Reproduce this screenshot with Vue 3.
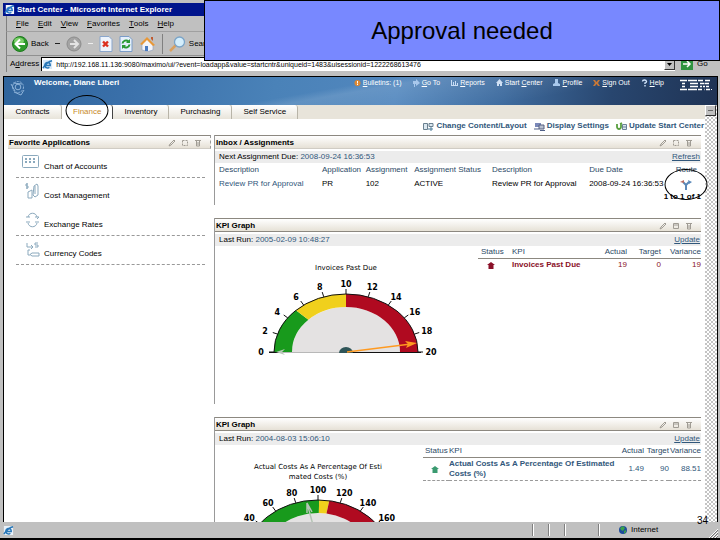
<script setup>
import { ref } from 'vue'

const address = ref('http://192.168.11.136:9080/maximo/ui/?event=loadapp&value=startcntr&uniqueid=1483&uisessionid=1222268613476')

const menus = ['File', 'Edit', 'View', 'Favorites', 'Tools', 'Help']
const tabs = ['Contracts', 'Finance', 'Inventory', 'Purchasing', 'Self Service']
const activeTab = ref('Finance')

const navLinks = [
  { key: 'B', rest: 'ulletins: (1)', icon: 'bulletin' },
  { key: 'G', rest: 'o To', icon: 'goto' },
  { key: 'R', rest: 'eports', icon: 'reports' },
  { pre: 'Start ', key: 'C', rest: 'enter', icon: 'home' },
  { key: 'P', rest: 'rofile', icon: 'profile' },
  { key: 'S', rest: 'ign Out', icon: 'signout' },
  { key: 'H', rest: 'elp', icon: 'help' }
]

const pageLinks = [
  { label: 'Change Content/Layout', icon: 'layout' },
  { label: 'Display Settings', icon: 'display' },
  { label: 'Update Start Center', icon: 'update' }
]

const favorites = [
  { name: 'Chart of Accounts', icon: 'chart', line: true },
  { name: 'Cost Management', icon: 'cost', line: false },
  { name: 'Exchange Rates', icon: 'exchange', line: true },
  { name: 'Currency Codes', icon: 'currency', line: true }
]

const RX = 72
const RY = 58
const IRX = 54
const IRY = 45

// t runs from 0 (left end of the dial) to 1 (right end)
const point = (g, t, rx, ry) => {
  const a = Math.PI * (1 - t)
  return [g.cx + rx * Math.cos(a), g.cy - ry * Math.sin(a)]
}

const segment = (g, from, to) => {
  const [x1, y1] = point(g, from, RX, RY)
  const [x2, y2] = point(g, to, RX, RY)
  const [x3, y3] = point(g, to, IRX, IRY)
  const [x4, y4] = point(g, from, IRX, IRY)
  return `M${x1} ${y1}A${RX} ${RY} 0 0 1 ${x2} ${y2}L${x3} ${y3}A${IRX} ${IRY} 0 0 0 ${x4} ${y4}Z`
}

const buildGauge = (g) => ({
  ...g,
  segments: g.bands.map(b => ({ color: b[2], d: segment(g, b[0], b[1]) })),
  ticks: g.marks.map(value => {
    const t = value / g.max
    return {
      value,
      from: point(g, t, RX, RY),
      to: point(g, t, RX + 5, RY + 5),
      label: point(g, t, RX + 13, RY + 10)
    }
  })
})

const green = '#189a1c'
const yellow = '#f0d01c'
const red = '#b00a20'

const kpis = [
  {
    lastRun: '2005-02-09 10:48:27',
    kpi: 'Invoices Past Due',
    actual: '19',
    target: '0',
    variance: '19',
    tone: 'bad',
    gauge: buildGauge({
      cx: 131,
      cy: 106,
      max: 20,
      marks: [0, 2, 4, 6, 8, 10, 12, 14, 16, 18, 20],
      title: ['Invoices Past Due'],
      bands: [[0, 0.255, green], [0.255, 0.5, yellow], [0.5, 1, red]]
    })
  },
  {
    lastRun: '2004-08-03 15:06:10',
    kpi: 'Actual Costs As A Percentage Of Estimated Costs (%)',
    actual: '1.49',
    target: '90',
    variance: '88.51',
    tone: 'good',
    gauge: buildGauge({
      cx: 103,
      cy: 113,
      max: 200,
      marks: [40, 60, 80, 100, 120, 140, 160],
      title: ['Actual Costs As A Percentage Of Esti', 'mated Costs (%)'],
      bands: [[0, 0.505, green], [0.505, 0.55, yellow], [0.55, 1, red]]
    })
  }
]
</script>

<template>
  <div class="screen">
    <header class="title-bar">
      <svg class="ie" viewBox="0 0 12 12"><path d="M2 1h7l2 2v8H2z" fill="#f4f6fa" /><path d="M3 7h6a3 3 0 1 0-1 2M1 10C3 7 6 3 11 2" fill="none" stroke="#2a78c8" stroke-width="1.6" /></svg>
      <span>Start Center - Microsoft Internet Explorer</span>
    </header>

    <nav class="menu-bar">
      <button v-for="m in menus" :key="m" type="button"><u>{{ m[0] }}</u>{{ m.slice(1) }}</button>
    </nav>

    <div class="tool-bar">
      <button type="button" class="back">
        <svg width="16" height="16" viewBox="0 0 16 16"><circle cx="8" cy="8" r="7.5" fill="#2f9a2c" stroke="#1e7a1e" /><ellipse cx="7" cy="5" rx="5" ry="3.5" fill="#7ccf6a" /><path d="M8 3.5L3.5 8 8 12.5M4 8h9" fill="none" stroke="#fff" stroke-width="2" /></svg>
        <span>Back</span>
      </button>
      <span class="dash"></span>
      <button type="button" aria-label="Forward">
        <svg width="16" height="16" viewBox="0 0 16 16"><circle cx="8" cy="8" r="7" fill="#a4a4a4" stroke="#8c8c8c" /><path d="M8 4l4 4-4 4M12 8H4" fill="none" stroke="#e4e4e4" stroke-width="2" /></svg>
      </button>
      <span class="dash light"></span>
      <button type="button" aria-label="Stop">
        <svg width="14" height="16" viewBox="0 0 14 16"><path d="M1 .5h9l3 3v12H1z" fill="#eef4fc" stroke="#8aa6cc" /><path d="M4 5.5l5 5M9 5.5l-5 5" stroke="#dc3020" stroke-width="2.4" /></svg>
      </button>
      <button type="button" aria-label="Reload">
        <svg width="14" height="16" viewBox="0 0 14 16"><path d="M1 .5h9l3 3v12H1z" fill="#e6f0fc" stroke="#7a9cc8" /><path d="M3.5 7.5a3.5 3.5 0 0 1 6-2M10.5 8.5a3.5 3.5 0 0 1-6 2" fill="none" stroke="#2a9a34" stroke-width="2" /><path d="M11 3v4H7zM3 13V9h4z" fill="#2a9a34" /></svg>
      </button>
      <button type="button" aria-label="Home">
        <svg width="17" height="16" viewBox="0 0 17 16"><path d="M3 8l5-5 6 5v6l-5 1.5L3 14z" fill="#f4f4f8" stroke="#8a9cb8" stroke-width=".6" /><path d="M1 8l7-7 8 8-2 1-6-6-5 5z" fill="#e89838" /><path d="M6 10h3v5H6z" fill="#4a7ac0" /><path d="M12 1h2v4l-2-2z" fill="#c05a30" /></svg>
      </button>
      <i class="grip"></i>
      <button type="button" class="search">
        <svg width="17" height="16" viewBox="0 0 17 16"><path d="M7 9l-6 6" stroke="#d8a060" stroke-width="2.5" /><circle cx="10.5" cy="6" r="5" fill="#d4eefc" stroke="#7aa4c8" stroke-width="1.3" /></svg>
        <span>Search</span>
      </button>
    </div>

    <div class="address-bar">
      <label for="address">A<u>d</u>dress</label>
      <div class="address-box">
        <svg class="ie" viewBox="0 0 12 12"><path d="M1 1h8l2 2v8H1z" fill="#d8e8f8" /><path d="M3 7h6a3 3 0 1 0-1 2M1 10C3 7 6 3 11 2" fill="none" stroke="#2a78b8" stroke-width="1.6" /></svg>
        <input id="address" v-model="address" type="text" />
        <button type="button" class="drop" aria-label="Show addresses"><svg width="5" height="3" viewBox="0 0 5 3"><path d="M0 0h5L2.5 3z" /></svg></button>
      </div>
      <button type="button" class="go">
        <svg width="12" height="12" viewBox="0 0 12 12"><path d="M0 0h12v12H0z" fill="#2e9440" /><path d="M2 6h7M6 3l3 3-3 3" fill="none" stroke="#fff" stroke-width="1.5" /></svg>
        <span>Go</span>
      </button>
    </div>

    <div class="browser">
      <div class="banner">
        <svg class="emblem" viewBox="0 0 16 16"><g fill="none" stroke="#8fb4da"><circle cx="8" cy="7" r="5.5" stroke-dasharray="2 1" /><circle cx="8" cy="7" r="2.8" /><path d="M1 4l4 7M14 10l-3 5M4 12l7 3M3 3l9 1" /></g></svg>
        <strong>Welcome, Diane Liberi</strong>
        <nav>
          <a v-for="l in navLinks" :key="l.icon" href="#">
            <svg width="7" height="8" viewBox="0 0 7 8">
              <template v-if="l.icon === 'bulletin'"><circle cx="3.5" cy="4" r="3" fill="#e08830" /><path d="M3.5 2v2.5M3.5 5v1" stroke="#fff" /></template>
              <path v-else-if="l.icon === 'goto'" d="M0 2h3V0l4 4-4 3V5H2v3H1V5H0z" fill="#a8c8ec" />
              <path v-else-if="l.icon === 'reports'" d="M0 1h1v5h6v1H0zM2 3h1v3H2zM4 2h1v4H4zM6 4h1v2H6z" fill="#c8dcf4" />
              <path v-else-if="l.icon === 'home'" d="M3.5 0L7 4H6v3H4V5H3v2H1V4H0z" fill="#d0e0f4" />
              <path v-else-if="l.icon === 'profile'" d="M2 0h3v4l2 1v2H0V5l2-1z" fill="#a8c8ec" />
              <path v-else-if="l.icon === 'signout'" d="M0 1h2l1.5 2L5 1h2L5 4l2 3H5L3.5 5 2 7H0l2-3z" fill="#c87838" />
              <path v-else d="M1.5 2.5a2 1.5 0 1 1 2.5 1.5v1M4 6v1.5" fill="none" stroke="#d0e4fc" stroke-width="1.4" />
            </svg>
            <span>{{ l.pre }}<u>{{ l.key }}</u>{{ l.rest }}</span>
          </a>
        </nav>
        <svg class="ibm" viewBox="0 0 32 12" aria-label="IBM">
          <g fill="none" stroke="#fff">
            <path d="M0 1.5h7M8 1.500h9M18 1.5h5M25 1.5h5M2 4.5h3M10 4.5h8M20 4.5h4M24.500 4.5h4.500M2 7.5h3M10 7.5h8M20 7.5h2M23 7.500h2M26 7.5h3M0 10.5h7M8 10.5h9M18 10.5h4M24 10.5h0.500M26 10.5h4" stroke-width="1.500" />
            <path d="M31 10.500h1" />
          </g>
        </svg>
      </div>

      <div class="viewport">
        <main class="page">
          <div class="tabs">
            <div v-for="t in tabs" :key="t" class="tab" :class="{ active: t === activeTab }">
              <button type="button" @click="activeTab = t">{{ t }}</button>
              <i v-if="t === 'Finance'" class="ring"></i>
            </div>
          </div>

          <div class="page-links">
            <a v-for="l in pageLinks" :key="l.icon" href="#">
              <svg width="11" height="9" viewBox="0 0 11 9">
                <template v-if="l.icon === 'layout'"><path d="M.5 1.5h4v6h-4zM6 1.5h4v3H6z" fill="#dce8f0" stroke="#6a8090" /><path d="M5 7h5M8 5v4" stroke="#4a7a98" /></template>
                <template v-else-if="l.icon === 'display'"><path d="M1 1h6v4H1z" fill="#7a88b8" /><path d="M5 3h5v4H5z" fill="#b8c0d0" stroke="#566080" /><path d="M0 7h5M6 8.5h5" stroke="#506088" /></template>
                <template v-else><path d="M1 2v3a2 2 0 0 0 4 0V2M4 2l2-1" fill="none" stroke="#5aa040" stroke-width="1.8" /><path d="M6.5 2.5h4v5h-4zM6 5h5" fill="#dce8f0" stroke="#6a8098" /></template>
              </svg>
              <span>{{ l.label }}</span>
            </a>
          </div>

          <div class="columns">
            <section class="portlet favorites">
              <h2>
                <span>Favorite Applications</span>
                <svg class="tools" viewBox="0 0 34 8"><g fill="none" stroke="#a09c94"><path d="M1 7l1-2 4-4 1 1-4 4z" /><path d="M14.5 1.5h5v5h-5z" stroke-dasharray="2 1" /><path d="M27 1.5h6M28.5 2v5h3V2M30 3v3" /></g></svg>
              </h2>
              <ul>
                <li v-for="f in favorites" :key="f.name" :class="{ line: f.line }">
                  <svg width="18" height="16" viewBox="0 0 18 16">
                    <g fill="none" stroke="#8ba9bd">
                      <template v-if="f.icon === 'chart'"><rect x=".5" y="1.5" width="16" height="12" rx="1" /><path d="M3 5h11M3 8h11" stroke-width="2" stroke-dasharray="2 2" /></template>
                      <template v-else-if="f.icon === 'cost'"><path d="M6 1H4v2h2v2H4M5 0v6M6 9l4-2v8H6zM12 3l3-2 1 2v9l-3 2-2-2zM13 3v8" /></template>
                      <template v-else-if="f.icon === 'exchange'"><path d="M6 5c1-5 8-5 9 0M4 5h4M13 5h4L15 7M6 11c1 5 8 5 9 0M4 10h4M13 10h4" /></template>
                      <template v-else><path d="M5 2v4h6M9 4l2 2-2 2M16 2h-3v2h3v2h-3M8 9H6v5h2M10 12h7v3h-7l-2-1.5z" /></template>
                    </g>
                  </svg>
                  <a href="#">{{ f.name }}</a>
                </li>
              </ul>
            </section>

            <div class="right">
              <section class="portlet inbox">
                <h2>
                  <span>Inbox / Assignments</span>
                  <svg class="tools" viewBox="0 0 34 8"><g fill="none" stroke="#a09c94"><path d="M1 7l1-2 4-4 1 1-4 4z" /><path d="M14.5 1.5h5v5h-5z" stroke-dasharray="2 1" /><path d="M27 1.5h6M28.5 2v5h3V2M30 3v3" /></g></svg>
                </h2>
                <p class="info"><span>Next Assignment Due: <em>2008-09-24 16:36:53</em></span><a href="#">Refresh</a></p>
                <table class="assignments">
                  <colgroup>
                    <col class="w-desc" /><col class="w-app" /><col class="w-assign" /><col class="w-status" /><col class="w-desc2" /><col class="w-due" /><col />
                  </colgroup>
                  <thead>
                    <tr><th>Description</th><th>Application</th><th>Assignment</th><th>Assignment Status</th><th>Description</th><th>Due Date</th><th class="route">Route</th></tr>
                  </thead>
                  <tbody>
                    <tr>
                      <td><a href="#">Review PR for Approval</a></td><td>PR</td><td>102</td><td>ACTIVE</td><td>Review PR for Approval</td><td>2008-09-24 16:36:53</td>
                      <td class="route">
                        <button type="button" aria-label="Route">
                          <svg width="12" height="11" viewBox="0 0 12 11"><path d="M6 11V6L3 3M6 6l3-3" fill="none" stroke="#5a88b8" stroke-width="2" /><path d="M0 3l4-2v3z" fill="#b86a60" /><path d="M8 1l4 2-3 2z" fill="#5a88b8" /></svg>
                        </button>
                        <i class="ring"></i>
                      </td>
                    </tr>
                  </tbody>
                </table>
                <p class="count">1 to 1 of 1</p>
              </section>

              <section v-for="k in kpis" :key="k.kpi" class="portlet kpi">
                <h2>
                  <span>KPI Graph</span>
                  <svg class="tools" viewBox="0 0 34 8"><g fill="none" stroke="#a09c94"><path d="M1 7l1-2 4-4 1 1-4 4z" /><path d="M14.5 1.5h5v5h-5zM14 3h6" /><path d="M27 1.5h6M28.5 2v5h3V2M30 3v3" /></g></svg>
                </h2>
                <p class="info"><span>Last Run: <em>{{ k.lastRun }}</em></span><a href="#">Update</a></p>
                <div class="kpi-body">
                  <svg class="gauge" width="230" height="157" viewBox="0 0 230 157">
                    <text v-for="(line, i) in k.gauge.title" :key="line" class="gauge-title" :x="k.gauge.cx" :y="24 + i * 10">{{ line }}</text>
                    <ellipse :cx="k.gauge.cx" :cy="k.gauge.cy" rx="54" ry="45" fill="#e4e2e2" />
                    <rect x="0" :y="k.gauge.cy" width="230" height="60" fill="#fff" />
                    <path v-for="s in k.gauge.segments" :key="s.color" :d="s.d" :fill="s.color" />
                    <path :d="`M${k.gauge.cx - 72} ${k.gauge.cy}a72 58 0 0 1 144 0`" fill="none" stroke="#111" />
                    <template v-for="t in k.gauge.ticks" :key="t.value">
                      <line :x1="t.from[0]" :y1="t.from[1]" :x2="t.to[0]" :y2="t.to[1]" stroke="#111" />
                      <text class="tick" :x="t.label[0]" :y="t.label[1] + 3">{{ t.value }}</text>
                    </template>
                    <g v-if="k.tone === 'bad'">
                      <path d="M54 106.5h152" stroke="#111" />
                      <path d="M66 106.5h64" stroke="#b8b8b8" />
                      <path d="M61 106l9-3-3 3 3 3z" fill="#b8c8b8" />
                      <path d="M124 107a7 6 0 0 1 14 0z" fill="#2f5558" />
                      <path d="M132 106l64-8" stroke="#ff9a20" stroke-width="1.5" />
                      <path d="M202 97l-12-2 3 3-2 4z" fill="#ff9a20" />
                    </g>
                    <path v-else d="M92 58l6 22M92 58v10M92 58l5 9" fill="none" stroke="#b4c4b4" stroke-width="1.5" />
                  </svg>
                  <table class="measures" :class="k.tone">
                    <thead>
                      <tr><th class="status">Status</th><th class="name">KPI</th><th class="actual">Actual</th><th class="target">Target</th><th class="variance">Variance</th></tr>
                    </thead>
                    <tbody>
                      <tr>
                        <td class="status"><svg width="8" height="7" viewBox="0 0 8 7"><path d="M4 0l4 3H6.5v4h-5V3H0z" fill="currentColor" /></svg></td>
                        <td class="name"><b>{{ k.kpi }}</b></td><td>{{ k.actual }}</td><td>{{ k.target }}</td><td>{{ k.variance }}</td>
                      </tr>
                    </tbody>
                  </table>
                </div>
              </section>
            </div>
          </div>
        </main>
        <div class="scroll"><button type="button" aria-label="Scroll up"><svg width="5" height="3" viewBox="0 0 5 3"><path d="M0 1h5v1H0z" fill="#666" /></svg></button></div>
      </div>
    </div>

    <footer class="status-bar">
      <svg class="ie" viewBox="0 0 12 12"><path d="M1 1h8l2 2v8H1z" fill="#e8f0f8" /><path d="M3 7h6a3 3 0 1 0-1 2M1 10C3 7 6 3 11 2" fill="none" stroke="#2a78b8" stroke-width="1.6" /></svg>
      <div class="panes"><i></i><i></i><i></i><i></i></div>
      <div class="zone">
        <svg width="10" height="10" viewBox="0 0 10 10"><circle cx="5" cy="5" r="4" fill="#1c4a9c" /><path d="M2 3l3-2 2 2-2 3-2-1zM6 6l2-1v2L6 9z" fill="#3aa04a" /></svg>
        <span>Internet</span>
      </div>
      <svg class="corner" width="10" height="10" viewBox="0 0 10 10"><path d="M1 10l9-9M4 10l6-6M7 10l3-3" stroke="#fff" /><path d="M2 10l8-8M5 10l5-5M8 10l2-2" stroke="#777" /></svg>
    </footer>

    <div class="callout">Approval needed</div>
    <span class="slide-number">34</span>
  </div>
</template>

<style>
body {
  margin: 0;
}
</style>

<style scoped>
* {
  box-sizing: border-box;
}

.screen {
  position: relative;
  display: flex;
  flex-direction: column;
  height: 100vh;
  overflow: hidden;
  padding: 3px 0 0 3px;
  border-bottom: 2px solid #000;
  background: #c0c0c0;
  color: #000;
  font-family: "Liberation Sans", Arial, sans-serif;
  font-size: 8px;
  line-height: 10px;
}

button {
  display: flex;
  align-items: center;
  padding: 0;
  border: 0;
  background: none;
  color: inherit;
  font: inherit;
}

svg {
  display: block;
  flex: none;
}

a {
  color: #31577b;
  text-decoration: none;
}

p,
h2,
ul {
  margin: 0;
  padding: 0;
}

.ie {
  width: 11px;
  height: 11px;
}

.title-bar {
  display: flex;
  align-items: center;
  gap: 2px;
  height: 13px;
  padding-left: 1px;
  background: #00148c;
  color: #fff;
  font-weight: bold;
}

.menu-bar {
  display: flex;
  align-items: center;
  gap: 9px;
  height: 16px;
  margin-left: 3px;
  padding-left: 9px;
  border-left: 1px solid #808080;
  border-bottom: 1px solid #a0a0a0;
}

.tool-bar {
  display: flex;
  align-items: center;
  gap: 6px;
  height: 24px;
  margin-left: 3px;
  padding-left: 5px;
  border-left: 1px solid #808080;
  border-bottom: 1px solid #909090;
}

.back,
.search {
  gap: 3px;
}

.dash {
  width: 5px;
  height: 1px;
  background: #222;
}

.dash.light {
  background: #eee;
}

.grip {
  width: 1px;
  height: 20px;
  background: #808080;
}

.address-bar {
  display: flex;
  align-items: center;
  gap: 2px;
  height: 16px;
  margin-left: 3px;
  padding-left: 3px;
  border-left: 1px solid #808080;
}

.address-box {
  display: flex;
  flex: 1;
  align-items: center;
  height: 14px;
  border-top: 1px solid #000;
  border-left: 1px solid #000;
  background: #fff;
}

.address-box input {
  flex: 1;
  min-width: 0;
  padding: 0 3px;
  border: 0;
  outline: 0;
  background: none;
  font: inherit;
  font-size: 7px;
}

.drop,
.scroll button {
  justify-content: center;
  width: 11px;
  height: 11px;
  border: 1px solid;
  border-color: #fff #333 #333 #fff;
  background: #c0c0c0;
}

.go {
  gap: 4px;
  width: 43px;
  padding-left: 4px;
}

.browser {
  display: flex;
  flex: 1;
  flex-direction: column;
  min-height: 0;
  overflow: hidden;
  margin-top: 4px;
  margin-right: 2px;
  border: 1px solid #000;
  border-bottom: 0;
}

.viewport {
  display: flex;
  flex: 1;
  min-height: 0;
}

.page {
  flex: 1;
  min-width: 0;
  background: #fff;
}

.scroll {
  width: 12px;
  background: repeating-conic-gradient(#c4c4c4 0 25%, #fff 0 50%) 0 0 / 4px 4px;
}

.banner {
  display: flex;
  flex: none;
  align-items: flex-start;
  height: 28px;
  padding: 1px 5px 0 6px;
  background:
    linear-gradient(170deg, transparent 45%, rgba(255, 255, 255, 0.12) 50%, transparent 75%),
    linear-gradient(100deg, #2f649c 0%, #3a70aa 18%, #4a82b8 38%, #5287be 55%, #3f6c9f 70%, #28466f 85%, #1f3354 100%);
  color: #fff;
}

.emblem {
  width: 16px;
  height: 16px;
  margin: 2px 8px 0 0;
}

.banner nav {
  display: flex;
  flex: 1;
  justify-content: flex-end;
  gap: 11px;
  font-size: 7px;
}

.banner a {
  display: flex;
  align-items: center;
  gap: 2px;
  color: #fff;
}

.ibm {
  width: 32px;
  height: 12px;
  margin: 1px 0 0 16px;
}

.tabs {
  display: flex;
  height: 14px;
  background: #e8e4da;
}

.tab {
  position: relative;
  display: flex;
  justify-content: center;
  padding: 0 11px;
  border-right: 1px solid #b8b4a8;
  border-radius: 0 3px 0 0;
  background: linear-gradient(#fff, #e8e4da);
}

.tab:first-child {
  min-width: 58px;
}

.tab.active {
  border-right-color: #444;
  background: #fff;
  color: #c88a28;
}

.ring {
  position: absolute;
  top: -10px;
  left: 50%;
  width: 43px;
  height: 31px;
  border: 1px solid #000;
  border-radius: 50%;
  transform: translateX(-50%);
  pointer-events: none;
}

.page-links {
  display: flex;
  justify-content: flex-end;
  gap: 7px;
  height: 16px;
  padding: 2px 1px 0 0;
}

.page-links a {
  display: flex;
  align-items: center;
  gap: 2px;
  height: 10px;
  font-weight: bold;
}

.columns {
  display: grid;
  grid-template-columns: 203px 1fr;
  gap: 3px;
  padding: 0 4px;
}

.portlet h2 {
  display: flex;
  align-items: center;
  justify-content: space-between;
  height: 14px;
  padding: 1px 8px 0 1px;
  border-top: 1px solid #8c8880;
  border-bottom: 1px solid #d0ccc4;
  background: linear-gradient(#fff, #e6e1d6);
  font-size: 8px;
  line-height: 10px;
}

.tools {
  width: 34px;
  height: 8px;
}

.favorites h2 {
  border-right: 1px dashed #999;
}

.favorites ul {
  margin: 0 6px 0 8px;
  list-style: none;
}

.favorites li {
  display: flex;
  gap: 4px;
  height: 29px;
  padding: 5px 0 0 6px;
}

.favorites li.line {
  border-bottom: 1px dashed #999;
}

.favorites a {
  padding-top: 8px;
  color: #000;
}

.right {
  display: flex;
  flex-direction: column;
  gap: 13px;
}

.right .portlet {
  border-left: 1px solid #999;
}

.right .kpi h2 {
  border-bottom-color: #8c8880;
}

.info {
  display: flex;
  justify-content: space-between;
  margin-top: 2px;
  padding: 1px 1px 1px 4px;
  background: #ececec;
}

.info em {
  color: #31577b;
  font-style: normal;
}

.info a {
  text-decoration: underline;
}

table {
  border-collapse: collapse;
}

th,
td {
  padding: 0;
  text-align: left;
  white-space: nowrap;
}

th {
  color: #2c4a66;
  font-weight: normal;
}

.inbox {
  height: 70px;
}

.assignments {
  width: 100%;
  margin-top: 2px;
  table-layout: fixed;
}

.w-desc {
  width: 22%;
}

.w-app {
  width: 9%;
}

.w-assign {
  width: 10%;
}

.w-status {
  width: 16%;
}

.w-desc2 {
  width: 20%;
}

.w-due {
  width: 17%;
}

.assignments th:first-child,
.assignments td:first-child {
  padding-left: 4px;
}

.assignments tbody td {
  height: 18px;
}

.assignments .route {
  position: relative;
  text-align: center;
}

.route button {
  margin: 0 auto;
}

.route .ring {
  top: -6px;
}

.count {
  font-weight: bold;
  line-height: 8px;
  text-align: right;
}

.kpi {
  height: 186px;
}

.kpi-body {
  display: flex;
  align-items: flex-start;
  justify-content: space-between;
}

.gauge {
  margin-right: -30px;
}

.gauge-title {
  font-family: "DejaVu Sans", sans-serif;
  font-size: 7px;
  text-anchor: middle;
}

.tick {
  font-family: "DejaVu Sans", sans-serif;
  font-size: 8px;
  font-weight: bold;
  text-anchor: middle;
}

.measures {
  width: 223px;
  table-layout: fixed;
}

.measures.good {
  width: 278px;
}

.measures th,
.measures td {
  padding: 1px 0;
  text-align: right;
}

.measures .status {
  width: 34px;
  padding-left: 3px;
  text-align: left;
}

.measures .actual,
.measures .target {
  width: 34px;
}

.measures .variance {
  width: 40px;
}

.measures.good .status {
  width: 26px;
  padding-left: 2px;
}

.measures.good .actual,
.measures.good .target {
  width: 25px;
}

.measures.good .variance {
  width: 32px;
}

.measures .name {
  text-align: left;
  white-space: normal;
}

.measures thead {
  border-bottom: 1px solid #8c8880;
}

.measures.good tbody {
  border-bottom: 1px dashed #999;
  color: #31577b;
}

.measures.bad tbody {
  color: #8a1028;
}

.measures .status svg {
  margin-left: 6px;
}

.good td.status {
  color: #3a9a70;
}

.status-bar {
  display: flex;
  align-items: center;
  height: 16px;
}

.panes {
  display: flex;
  flex: 1;
  justify-content: flex-end;
  gap: 14px;
}

.panes i {
  width: 2px;
  height: 12px;
  border-left: 1px solid #808080;
  border-right: 1px solid #fff;
}

.panes i:last-child {
  margin-left: 18px;
}

.zone {
  display: flex;
  align-items: center;
  gap: 3px;
  width: 108px;
  padding-left: 18px;
}

.corner {
  align-self: flex-end;
  margin-right: 2px;
}

.callout {
  position: absolute;
  top: 0;
  right: 0;
  left: 204px;
  display: flex;
  align-items: center;
  justify-content: center;
  height: 61px;
  border: 1px solid #000;
  background: #7888ff;
  font-size: 24px;
  line-height: 28px;
}

.slide-number {
  position: absolute;
  right: 12px;
  bottom: 12px;
  font-size: 10px;
}
</style>
